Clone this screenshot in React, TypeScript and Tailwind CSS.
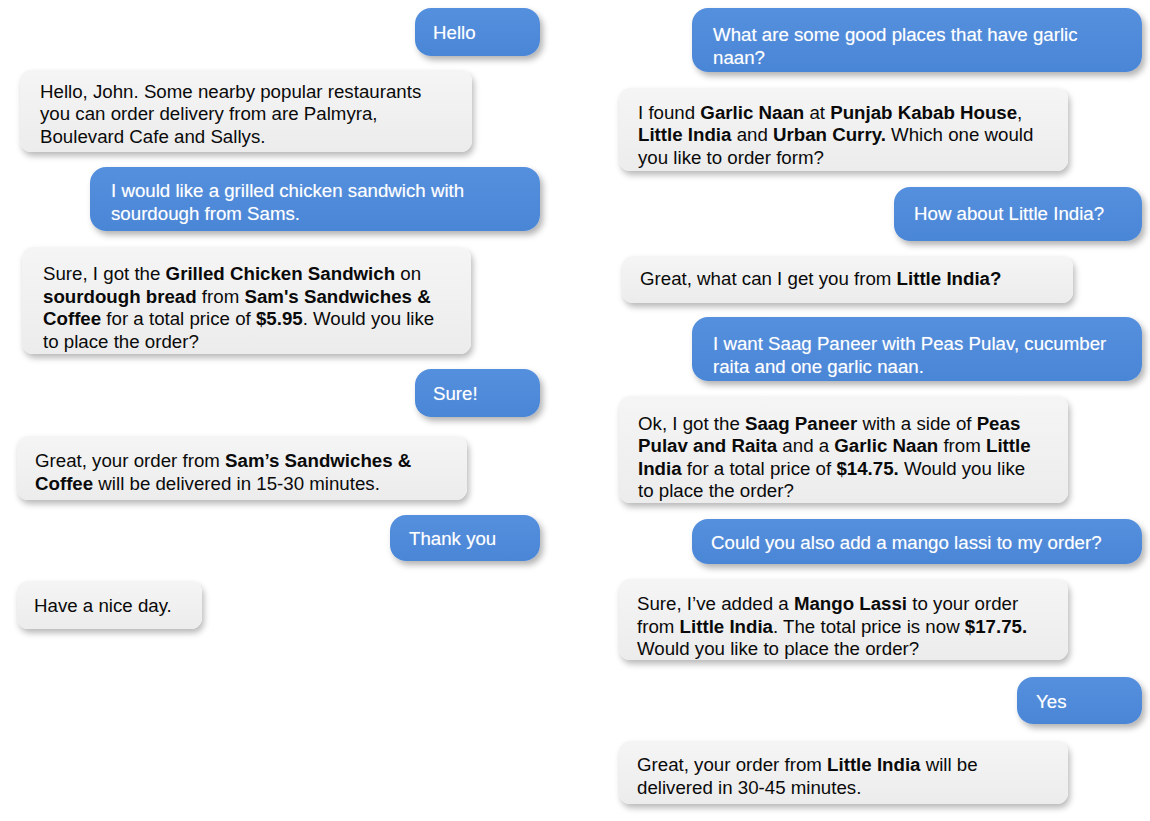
import React from "react";

type Msg = {
    from: "user" | "bot";
    box: string;
    text: React.ReactNode;
};

const B: React.FC<{ children: React.ReactNode }> = ({ children }) => (
    <b className="font-bold">{children}</b>
);

const leftChat: Msg[] = [
    { from: "user", box: "w-[125px] h-[48px] mt-[8px] pl-[18px] pt-[2px]", text: "Hello" },
    {
        from: "bot",
        box: "w-[452px] h-[82px] mt-[14px] ml-[20px] pl-[20px] pt-[7px]",
        text: (
            <>
                Hello, John. Some nearby popular restaurants
                <br />
                you can order delivery from are Palmyra,
                <br />
                Boulevard Cafe and Sallys.
            </>
        ),
    },
    {
        from: "user",
        box: "w-[450px] h-[64px] mt-[15px] pl-[21px] pt-[7px]",
        text: (
            <>
                I would like a grilled chicken sandwich with
                <br />
                sourdough from Sams.
            </>
        ),
    },
    {
        from: "bot",
        box: "w-[449px] h-[107px] mt-[16px] ml-[22px] pl-[21px] pt-[15px]",
        text: (
            <>
                Sure, I got the <B>Grilled Chicken Sandwich</B> on
                <br />
                <B>sourdough bread</B> from <B>Sam's Sandwiches &amp;</B>
                <br />
                <B>Coffee</B> for a total price of <B>$5.95</B>. Would you like
                <br />
                to place the order?
            </>
        ),
    },
    { from: "user", box: "w-[125px] h-[48px] mt-[15px] pl-[18px] pt-[2px]", text: "Sure!" },
    {
        from: "bot",
        box: "w-[450px] h-[64px] mt-[19px] ml-[17px] pl-[18px] pt-[9px]",
        text: (
            <>
                Great, your order from <B>Sam’s Sandwiches &amp;</B>
                <br />
                <B>Coffee</B> will be delivered in 15-30 minutes.
            </>
        ),
    },
    { from: "user", box: "w-[150px] h-[46px] mt-[15px] pl-[19px] pt-[2px]", text: "Thank you" },
    {
        from: "bot",
        box: "w-[185px] h-[48px] mt-[20px] ml-[17px] pl-[17px] pt-[2px]",
        text: "Have a nice day.",
    },
];

const rightChat: Msg[] = [
    {
        from: "user",
        box: "w-[450px] h-[64px] mt-[8px] pl-[21px] pt-[13px]",
        text: (
            <>
                What are some good places that have garlic
                <br />
                naan?
            </>
        ),
    },
    {
        from: "bot",
        box: "w-[449px] h-[83px] mt-[16px] ml-0 pl-[19px] pt-[12px]",
        text: (
            <>
                I found <B>Garlic Naan</B> at <B>Punjab Kabab House</B>,
                <br />
                <B>Little India</B> and <B>Urban Curry.</B> Which one would
                <br />
                you like to order form?
            </>
        ),
    },
    {
        from: "user",
        box: "w-[248px] h-[54px] mt-[16px] pl-[20px] pt-0",
        text: "How about Little India?",
    },
    {
        from: "bot",
        box: "w-[451px] h-[47px] mt-[15px] ml-[3px] pl-[18px] pt-0",
        text: (
            <>
                Great, what can I get you from <B>Little India?</B>
            </>
        ),
    },
    {
        from: "user",
        box: "w-[450px] h-[64px] mt-[14px] pl-[21px] pt-[13px]",
        text: (
            <>
                I want Saag Paneer with Peas Pulav, cucumber
                <br />
                raita and one garlic naan.
            </>
        ),
    },
    {
        from: "bot",
        box: "w-[449px] h-[107px] mt-[15px] ml-0 pl-[19px] pt-[16px]",
        text: (
            <>
                Ok, I got the <B>Saag Paneer</B> with a side of <B>Peas</B>
                <br />
                <B>Pulav and Raita</B> and a <B>Garlic Naan</B> from <B>Little</B>
                <br />
                <B>India</B> for a total price of <B>$14.75.</B> Would you like
                <br />
                to place the order?
            </>
        ),
    },
    {
        from: "user",
        box: "w-[450px] h-[45px] mt-[16px] pl-[19px] pt-[4px]",
        text: "Could you also add a mango lassi to my order?",
    },
    {
        from: "bot",
        box: "w-[449px] h-[81px] mt-[15px] ml-0 pl-[18px] pt-[15px]",
        text: (
            <>
                Sure, I’ve added a <B>Mango Lassi</B> to your order
                <br />
                from <B>Little India</B>. The total price is now <B>$17.75.</B>
                <br />
                Would you like to place the order?
            </>
        ),
    },
    { from: "user", box: "w-[125px] h-[47px] mt-[17px] pl-[19px] pt-[4px]", text: "Yes" },
    {
        from: "bot",
        box: "w-[449px] h-[63px] mt-[17px] ml-0 pl-[18px] pt-[8px]",
        text: (
            <>
                Great, your order from <B>Little India</B> will be
                <br />
                delivered in 30-45 minutes.
            </>
        ),
    },
];

const Bubble: React.FC<{ msg: Msg }> = ({ msg }) => {
    if (msg.from === "user") {
        return (
            <div
                className={`self-end flex items-center rounded-[16px] bg-gradient-to-b from-[#5590de] to-[#4a86d6] text-white shadow-[3px_4px_6px_rgba(0,0,0,0.3)] [text-shadow:0_0_1px_rgba(255,255,255,0.4)] ${msg.box}`}
            >
                <p className="text-[18.7px] leading-[22.5px] whitespace-nowrap">{msg.text}</p>
            </div>
        );
    }
    return (
        <div
            className={`self-start flex items-center rounded-[11px] bg-gradient-to-b from-[#f5f5f5] to-[#ececec] text-[#0a0a0a] shadow-[2px_4px_6px_rgba(0,0,0,0.28)] ${msg.box}`}
        >
            <p className="text-[18.7px] leading-[22.5px] whitespace-nowrap">{msg.text}</p>
        </div>
    );
};

export default function App() {
    return (
        <div className="w-[1150px] h-[821px] bg-white overflow-hidden font-['Liberation_Sans',Arial,sans-serif]">
            <div className="flex">
                {/* Left conversation */}
                <div className="w-[540px] flex flex-col">
                    {leftChat.map((m, i) => (
                        <Bubble key={i} msg={m} />
                    ))}
                </div>

                {/* Right conversation */}
                <div className="ml-[79px] w-[523px] flex flex-col">
                    {rightChat.map((m, i) => (
                        <Bubble key={i} msg={m} />
                    ))}
                </div>
            </div>
        </div>
    );
}
